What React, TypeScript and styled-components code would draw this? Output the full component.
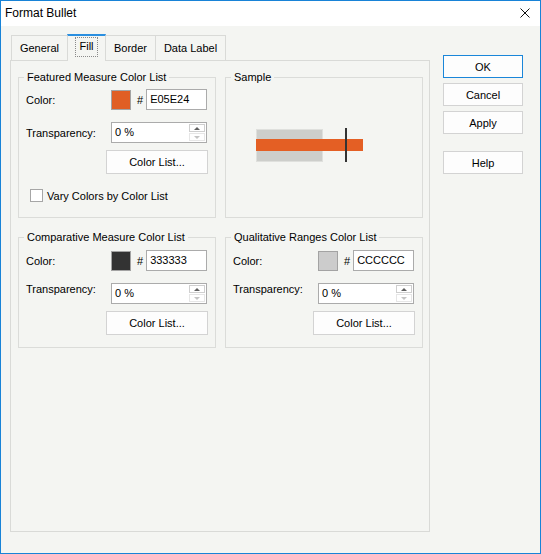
import React from 'react';
import styled, { createGlobalStyle } from 'styled-components';

const BG = '#f4f5f2';
const LINE = '#d9dad7';

const GlobalStyle = createGlobalStyle`
  html, body {
    margin: 0;
    padding: 0;
    background: ${BG};
  }
  body {
    font-family: "Liberation Sans", Arial, sans-serif;
    font-size: 11px;
    color: #000;
  }
  * {
    box-sizing: border-box;
  }
`;

const Window = styled.div`
  width: 541px;
  height: 554px;
  border: 1px solid #1883d7;
  background: ${BG};
  display: flex;
  flex-direction: column;
`;

const TitleBar = styled.div`
  height: 25px;
  flex-shrink: 0;
  background: #fff;
  display: flex;
  align-items: center;
  justify-content: space-between;
  padding: 0 10px 1px 4px;
  font-size: 12px;
`;

const CloseIcon = styled.svg`
  display: block;
`;

const Body = styled.div`
  display: flex;
  align-items: flex-start;
  padding: 8px 0 0 9px;
`;

const Main = styled.div`
  width: 420px;
  display: flex;
  flex-direction: column;
`;

const TabStrip = styled.div`
  display: flex;
  align-items: flex-end;
  height: 26px;
  padding-left: 1px;
  position: relative;
  z-index: 1;
`;

const Tab = styled.div<{ $active?: boolean; $w: number }>`
  width: ${(p) => p.$w}px;
  height: ${(p) => (p.$active ? 27 : 25)}px;
  margin-bottom: ${(p) => (p.$active ? -1 : 0)}px;
  margin-left: -1px;
  border: 1px solid ${LINE};
  border-bottom: none;
  border-top: ${(p) => (p.$active ? '2px solid #2a8fe0' : `1px solid ${LINE}`)};
  background: ${BG};
  display: flex;
  justify-content: center;
  align-items: flex-start;
  padding-top: ${(p) => (p.$active ? 1 : 5)}px;
  line-height: 14px;
  position: relative;
  z-index: ${(p) => (p.$active ? 2 : 1)};

  &:first-child {
    margin-left: 0;
  }
`;

const FocusText = styled.span`
  display: inline-block;
  padding: 1px 3px 3px;
  border: 1px dotted #8a8a8a;
  line-height: 14px;
`;

const TabPanel = styled.div`
  height: 472px;
  border: 1px solid ${LINE};
  padding: 9px 0 0 7px;
  display: grid;
  grid-template-columns: 198px 198px;
  grid-template-rows: 148px 118px;
  column-gap: 9px;
  row-gap: 12px;
  align-content: start;
`;

const GroupBox = styled.fieldset<{ $padTop?: number }>`
  margin: 0;
  padding: ${(p) => p.$padTop ?? 5}px 7px 0 7px;
  border: 1px solid #dbdcd9;
  min-width: 0;
`;

const Legend = styled.legend`
  padding: 0 3px;
  margin-left: -2px;
  line-height: 14px;
  font-size: 11px;
`;

const Row = styled.div<{ $space?: number; $alignTop?: boolean; $h?: number }>`
  display: flex;
  align-items: ${(p) => (p.$alignTop ? 'flex-start' : 'center')};
  height: ${(p) => p.$h ?? 21}px;
  margin-top: ${(p) => p.$space ?? 0}px;
`;

const Label = styled.span<{ $alignTop?: boolean }>`
  width: 85px;
  flex-shrink: 0;
  line-height: 14px;
  margin-top: ${(p) => (p.$alignTop ? -1 : 0)}px;
`;

const Swatch = styled.div<{ $color: string }>`
  width: 20px;
  height: 20px;
  border: 1px solid #a3a3a3;
  background: ${(p) => p.$color};
`;

const Hash = styled.span`
  margin: 0 3px 0 6px;
`;

const TextBox = styled.div<{ $w: number }>`
  width: ${(p) => p.$w}px;
  height: 21px;
  border: 1px solid #ababab;
  background: #fff;
  padding-left: 3px;
  line-height: 19px;
`;

const Spin = styled.div`
  width: 96px;
  height: 21px;
  border: 1px solid #ababab;
  background: #fff;
  display: flex;
  align-items: center;
  padding: 1px 1px 1px 3px;
`;

const SpinValue = styled.span`
  flex: 1;
  line-height: 19px;
`;

const SpinButtons = styled.div`
  display: flex;
  flex-direction: column;
  gap: 1px;
`;

const SpinButton = styled.div<{ $disabled?: boolean }>`
  width: 16px;
  height: 8px;
  border: 1px solid ${(p) => (p.$disabled ? '#e6e6e6' : '#cfcfcf')};
  display: flex;
  align-items: center;
  justify-content: center;
`;

const Arrow = styled.span<{ $down?: boolean; $disabled?: boolean }>`
  width: 0;
  height: 0;
  border-left: 3px solid transparent;
  border-right: 3px solid transparent;
  ${(p) =>
    p.$down
      ? `border-top: 3px solid ${p.$disabled ? '#c4c4c4' : '#606060'};`
      : `border-bottom: 3px solid ${p.$disabled ? '#c4c4c4' : '#606060'};`}
`;

const ColorListButton = styled.button`
  margin: 0 0 0 80px;
  width: 104px;
  height: 24px;
  background: #fdfdfd;
  border: 1px solid #d3d3d3;
  font: inherit;
  color: #000;
  padding: 0;
`;

const CheckRow = styled.div`
  display: flex;
  align-items: center;
  margin-top: 15px;
  height: 13px;
`;

const CheckBox = styled.span`
  width: 13px;
  height: 13px;
  margin-left: 4px;
  border: 1px solid #a6a6a6;
  background: #fff;
`;

const CheckLabel = styled.span`
  margin-left: 4px;
  line-height: 14px;
`;

const Chart = styled.svg`
  display: block;
  margin: 39px 0 0 23px;
`;

const ButtonColumn = styled.div`
  display: flex;
  flex-direction: column;
  margin: 21px 0 0 13px;
`;

const DialogButton = styled.button<{ $default?: boolean; $space?: number }>`
  width: 80px;
  height: 23px;
  margin: ${(p) => p.$space ?? 0}px 0 0 0;
  background: #fdfdfd;
  border: 1px solid ${(p) => (p.$default ? '#1a86d9' : '#d3d3d3')};
  font: inherit;
  color: #000;
  padding: 0;
`;

const TABS = [
  { label: 'General', w: 57 },
  { label: 'Fill', w: 39, active: true },
  { label: 'Border', w: 51 },
  { label: 'Data Label', w: 71 },
];

interface ColorGroupProps {
  title: string;
  color: string;
  withVary?: boolean;
  lower?: boolean;
}

const SpinBox: React.FC<{ value: string }> = ({ value }) => (
  <Spin>
    <SpinValue>{value}</SpinValue>
    <SpinButtons>
      <SpinButton>
        <Arrow />
      </SpinButton>
      <SpinButton $disabled>
        <Arrow $down $disabled />
      </SpinButton>
    </SpinButtons>
  </Spin>
);

const ColorGroup: React.FC<ColorGroupProps> = ({ title, color, withVary, lower }) => (
  <GroupBox $padTop={lower ? 6 : 5}>
    <Legend>{title}</Legend>
    <Row>
      <Label>Color:</Label>
      <Swatch $color={`#${color}`} />
      <Hash>#</Hash>
      <TextBox $w={61}>{color}</TextBox>
    </Row>
    <Row $space={12} $alignTop={lower}>
      <Label $alignTop={lower}>Transparency:</Label>
      <SpinBox value="0 %" />
    </Row>
    <Row $space={7} $h={24}>
      <ColorListButton>Color List...</ColorListButton>
    </Row>
    {withVary && (
      <CheckRow>
        <CheckBox />
        <CheckLabel>Vary Colors by Color List</CheckLabel>
      </CheckRow>
    )}
  </GroupBox>
);

const App: React.FC = () => {
  return (
    <>
      <GlobalStyle />
      <Window>
        <TitleBar>
          <span>Format Bullet</span>
          <CloseIcon width="10" height="10" viewBox="0 0 10 10">
            <path d="M0.5 0.5 L9.5 9.5 M9.5 0.5 L0.5 9.5" stroke="#111" strokeWidth="1" fill="none" />
          </CloseIcon>
        </TitleBar>
        <Body>
          <Main>
            <TabStrip>
              {TABS.map((tab) => (
                <Tab key={tab.label} $w={tab.w} $active={tab.active}>
                  {tab.active ? <FocusText>{tab.label}</FocusText> : tab.label}
                </Tab>
              ))}
            </TabStrip>
            <TabPanel>
              <ColorGroup title="Featured Measure Color List" color="E05E24" withVary />
              <GroupBox>
                <Legend>Sample</Legend>
                <Chart width="108" height="34" viewBox="0 0 108 34">
                  <rect x="0.5" y="1.5" width="66" height="32" fill="#cdcecb" stroke="#dfe0dd" />
                  <rect x="0" y="11" width="107" height="12" fill="#e45f24" />
                  <rect x="89" y="0" width="2" height="34" fill="#333333" />
                </Chart>
              </GroupBox>
              <ColorGroup title="Comparative Measure Color List" color="333333" lower />
              <ColorGroup title="Qualitative Ranges Color List" color="CCCCCC" lower />
            </TabPanel>
          </Main>
          <ButtonColumn>
            <DialogButton $default>OK</DialogButton>
            <DialogButton $space={5}>Cancel</DialogButton>
            <DialogButton $space={5}>Apply</DialogButton>
            <DialogButton $space={17}>Help</DialogButton>
          </ButtonColumn>
        </Body>
      </Window>
    </>
  );
};

export default App;
